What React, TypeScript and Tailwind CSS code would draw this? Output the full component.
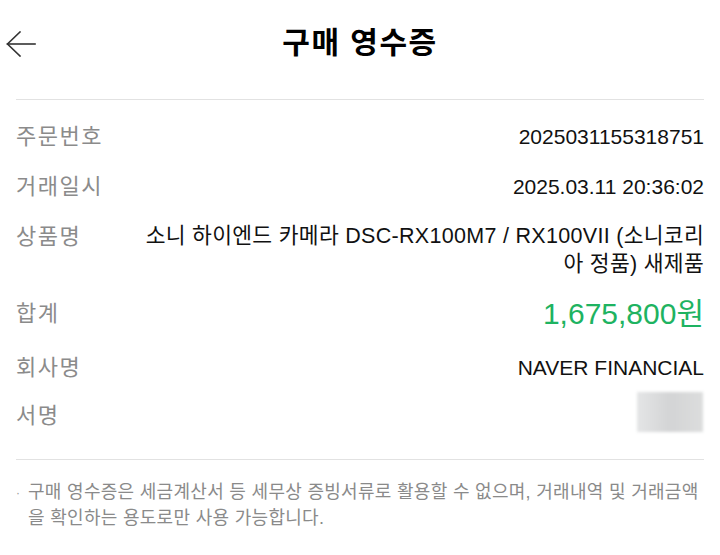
const KR = "font-['Liberation_Sans','Noto_Sans_CJK_KR',sans-serif]";

function BackArrow() {
  return (
    <svg width="30" height="26" viewBox="0 0 30 26" fill="none" stroke="#333" strokeWidth="1.6" strokeLinecap="square">
      <path d="M1.5 13 H29" />
      <path d="M14 1 L1.5 13 L14 25" strokeLinejoin="miter" />
    </svg>
  );
}

export default function App() {
  return (
    <div className={`w-[720px] h-[555px] bg-white px-4 overflow-hidden ${KR}`}>
      {/* header */}
      <div className="grid grid-cols-[1fr_auto_1fr] items-center h-[86px]">
        <div className="-ml-[10px] pt-[1px]">
          <BackArrow />
        </div>
        <h1 className="text-[30px] font-bold text-black leading-none tracking-[1.5px]">구매 영수증</h1>
        <div />
      </div>
      <div className="mt-[13px] h-px bg-[#e2e2e2]" />

      {/* rows */}
      <div className="pt-[22px] flex flex-col">
        <div className="flex justify-between items-start">
          <span className="text-[22px] leading-[30px] text-[#8b8b8b] tracking-[1.5px]">주문번호</span>
          <span className="text-[21px] leading-[30px] text-[#111]">2025031155318751</span>
        </div>
        <div className="mt-[20px] flex justify-between items-start">
          <span className="text-[22px] leading-[30px] text-[#8b8b8b] tracking-[1.5px]">거래일시</span>
          <span className="text-[21px] leading-[30px] text-[#111]">2025.03.11 20:36:02</span>
        </div>
        <div className="mt-[20px] flex justify-between items-start gap-4">
          <span className="text-[22px] leading-[30px] text-[#8b8b8b] tracking-[1.5px] shrink-0">상품명</span>
          <span className="w-[568px] text-right text-[21.5px] leading-[28px] text-[#111] tracking-[0.3px]">
            소니 하이엔드 카메라 DSC-RX100M7 / RX100VII (소니코리아 정품) 새제품
          </span>
        </div>
        <div className="mt-[20px] flex justify-between items-start">
          <span className="text-[22px] leading-[32px] text-[#8b8b8b] tracking-[1.5px]">합계</span>
          <span className="text-[30px] leading-[32px] text-[#1eb361]">1,675,800원</span>
        </div>
        <div className="mt-[23px] flex justify-between items-start">
          <span className="text-[22px] leading-[30px] text-[#8b8b8b] tracking-[1.5px]">회사명</span>
          <span className="text-[21px] leading-[30px] text-[#111]">NAVER FINANCIAL</span>
        </div>
        <div className="mt-[9px] flex justify-between items-start">
          <span className="mt-[9px] text-[22px] leading-[30px] text-[#8b8b8b] tracking-[1.5px]">서명</span>
          <div className="w-[66px] h-[40px] mr-[1px] bg-gradient-to-r from-[#e4e5e6] via-[#d3d4d5] to-[#dcdddd] blur-[1.5px]" />
        </div>
      </div>

      <div className="mt-[27px] h-px bg-[#e2e2e2]" />

      {/* notice */}
      <div className="pt-[19px] flex items-start">
        <span className="w-[12px] shrink-0 text-[#999] text-[12px] leading-[26px] pt-[1px]">·</span>
        <p className="text-[18px] leading-[26px] text-[#8a8a8a] tracking-[0.3px]">
          구매 영수증은 세금계산서 등 세무상 증빙서류로 활용할 수 없으며, 거래내역 및 거래금액을 확인하는 용도로만 사용 가능합니다.
        </p>
      </div>
    </div>
  );
}
